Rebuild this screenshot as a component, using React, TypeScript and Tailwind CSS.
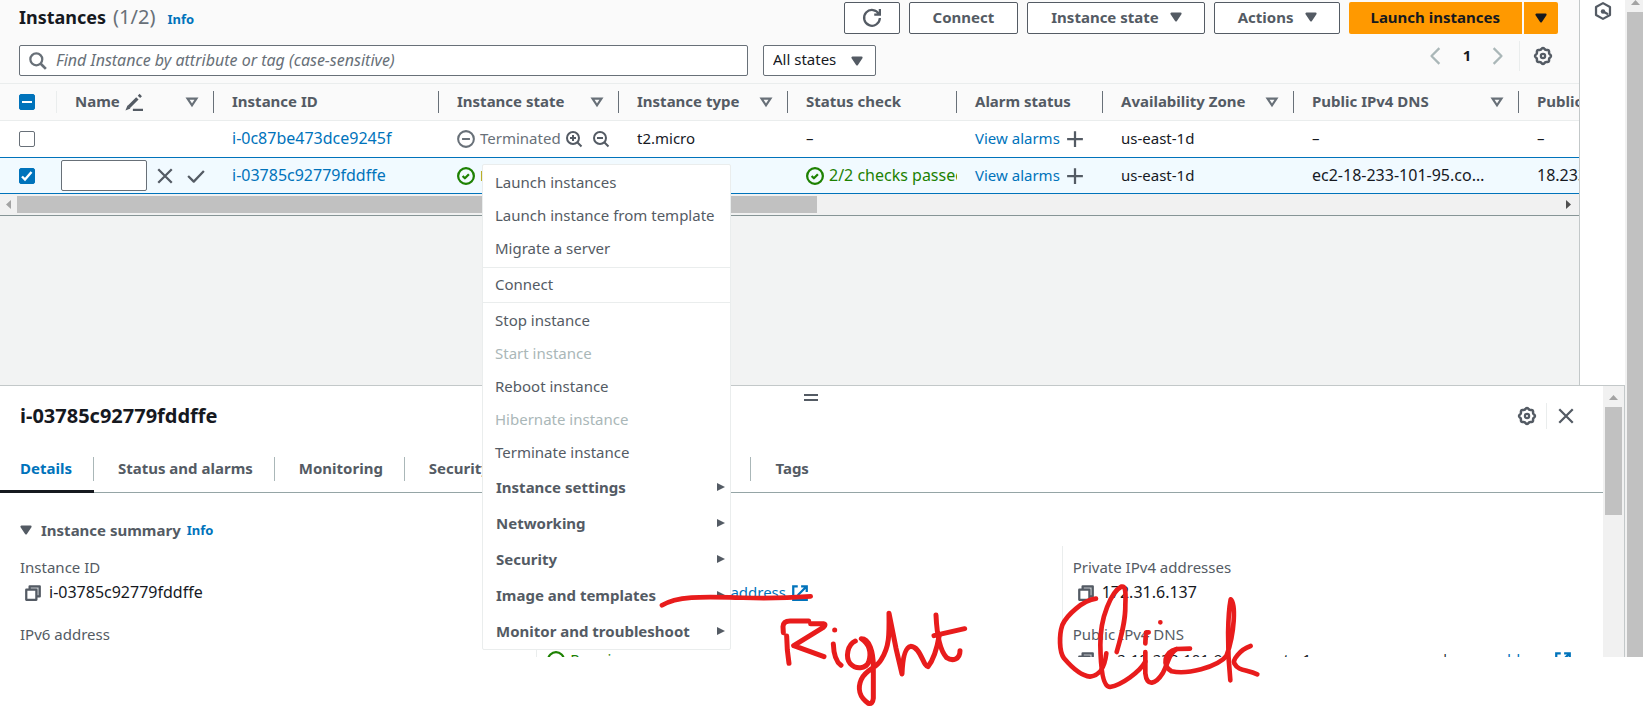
import React, { useEffect, useRef, useState } from "react";

type IconProps = { className?: string; children: React.ReactNode };

function Icon({ className = "size-[18px]", children }: IconProps) {
  return (
    <svg
      viewBox="0 0 16 16"
      fill="none"
      stroke="currentColor"
      strokeWidth="2"
      strokeLinejoin="round"
      className={"shrink-0 overflow-visible " + className}
      aria-hidden="true"
    >
      {children}
    </svg>
  );
}

const CaretFilled = ({ className }: { className?: string }) => (
  <Icon className={className}>
    <path d="M4 5h8l-4 6-4-6z" fill="currentColor" />
  </Icon>
);
const CaretHollow = () => (
  <Icon>
    <path d="M4 5h8l-4 6-4-6z" strokeLinejoin="miter" strokeWidth="1.9" />
  </Icon>
);
const CaretRight = () => (
  <Icon className="size-2">
    <path d="M0 0l16 8-16 8z" fill="currentColor" stroke="none" />
  </Icon>
);
const StatusOk = () => (
  <Icon>
    <circle cx="8" cy="8" r="7" />
    <path d="m5 8 2 2 3.6-3.6" />
  </Icon>
);
const StatusStopped = () => (
  <Icon>
    <circle cx="8" cy="8" r="7" strokeWidth="1.8" />
    <path d="M11.5 8h-7" strokeWidth="1.8" />
  </Icon>
);
const Plus = () => (
  <Icon>
    <path d="M8 1v14M1 8h14" />
  </Icon>
);
const Close = ({ className }: { className?: string }) => (
  <Icon className={className}>
    <path d="m2 2 12 12M14 2 2 14" />
  </Icon>
);
const Copy = () => (
  <Icon>
    <path d="M5 5V2h9v9h-3" fill="#c3c7ca" />
    <path d="M2 5h9v9H2z" fill="#fff" />
  </Icon>
);
const External = () => (
  <Icon>
    <path d="M9 2h5v5M6 10l8-8M14 10v4H2V2h4" strokeLinejoin="miter" />
  </Icon>
);

const gearPath =
  Array.from({ length: 96 }, (_, i) => {
    const a = (i / 96) * Math.PI * 2;
    const r = 6.5 + 0.55 * Math.cos(8 * a);
    return (i ? "L" : "M") + (8 + r * Math.cos(a)).toFixed(2) + " " + (8 + r * Math.sin(a)).toFixed(2);
  }).join("") + "Z";

const Gear = () => (
  <Icon>
    <path d={gearPath} strokeWidth="2.2" />
    <circle cx="8" cy="8" r="1.9" />
  </Icon>
);

function Checkbox({ label, state }: { label: string; state: "on" | "off" | "mixed" }) {
  const ref = useRef<HTMLInputElement>(null);
  const [on, setOn] = useState(state === "on");
  useEffect(() => {
    if (ref.current) ref.current.indeterminate = state === "mixed";
  }, [state]);
  return (
    <label className="grid size-4 place-items-center">
      <input
        ref={ref}
        type="checkbox"
        aria-label={label}
        checked={on}
        onChange={(e) => setOn(e.target.checked)}
        className="peer col-start-1 row-start-1 size-4 appearance-none rounded-[2px] border border-[#687078] bg-white checked:border-[#0073bb] checked:bg-[#0073bb] indeterminate:border-[#0073bb] indeterminate:bg-[#0073bb]"
      />
      <svg viewBox="0 0 16 16" fill="none" stroke="#fff" strokeWidth="2" className="pointer-events-none col-start-1 row-start-1 size-4">
        {state === "mixed" && <path d="M3 8h10" />}
        {on && <path d="m3 8.5 3 3L12.5 4" strokeWidth="2.4" />}
      </svg>
    </label>
  );
}

const outlineBtn = "flex h-8 items-center rounded-[2px] border border-[#545b64] bg-white pb-[2px] font-bold text-[#545b64]";

function Toolbar() {
  return (
    <div className="flex items-start justify-between pt-[2px] pr-[21px] pl-[19px]">
      <h1 className="flex items-baseline text-[18px] leading-[30px]">
        <span className="font-bold text-[#16191f]">Instances</span>
        <span className="ml-[7px] text-[20px] text-[#687078]">(1/2)</span>
        <a href="#info" className="ml-3 text-[13px] font-bold text-[#0073bb]">Info</a>
      </h1>
      <div className="flex gap-[9px]">
        <button aria-label="Refresh" className="grid h-8 w-14 place-items-center rounded-[2px] border border-[#545b64] bg-white text-[#545b64]">
          <Icon>
            <path d="M10 5h5V0M15 8a7 7 0 1 1-.8-3.4" strokeLinejoin="miter" />
          </Icon>
        </button>
        <button className={outlineBtn + " px-[23px]"}>Connect</button>
        <button className={outlineBtn + " gap-2 pr-[19px] pl-[23px]"}>Instance state <CaretFilled /></button>
        <button className={outlineBtn + " gap-2 pr-[19px] pl-[23px]"}>Actions <CaretFilled /></button>
        <div className="flex gap-[2px]">
          <button className="h-8 rounded-l-[2px] bg-[#ff9900] px-[22px] pb-[2px] font-bold text-[#16191f]">Launch instances</button>
          <button aria-label="More launch options" className="grid h-8 w-[34px] place-items-center rounded-r-[2px] bg-[#ff9900] text-[#16191f]">
            <CaretFilled />
          </button>
        </div>
      </div>
    </div>
  );
}

function Filters() {
  return (
    <div className="flex items-start pt-[7px] pr-[13px] pl-[19px]">
      <label className="mt-1 flex h-[31px] w-[729px] items-center gap-[9px] rounded-[2px] border border-[#687078] bg-white px-[9px] text-[#687078]">
        <Icon>
          <circle cx="6.5" cy="6.5" r="5.3" />
          <path d="m15 15-4.8-4.8" strokeWidth="2.4" />
        </Icon>
        <input
          type="search"
          aria-label="Find Instance by attribute or tag"
          placeholder="Find Instance by attribute or tag (case-sensitive)"
          className="min-w-0 flex-1 bg-transparent pb-[2px] text-base outline-none placeholder:text-[#687078] placeholder:italic"
        />
      </label>
      <label className="mt-1 ml-[15px] grid w-[113px] items-center">
        <select aria-label="Instance state filter" className="col-start-1 row-start-1 h-[31px] appearance-none rounded-[2px] border border-[#687078] bg-white pb-1 pl-[9px] text-[#16191f]">
          <option>All states</option>
        </select>
        <span className="pointer-events-none col-start-1 row-start-1 mr-[10px] justify-self-end text-[#545b64]">
          <CaretFilled />
        </span>
      </label>
      <nav aria-label="Pages" className="ml-auto flex h-[30px] items-center">
        <button aria-label="Previous page" className="grid w-[34px] place-items-center text-[#aab7b8]">
          <Icon><path d="M11 1 4 8l7 7" /></Icon>
        </button>
        <button className="w-7 pb-[2px] text-center font-bold text-[#16191f]">1</button>
        <button aria-label="Next page" className="grid w-8 place-items-center text-[#aab7b8]">
          <Icon><path d="m5 1 7 7-7 7" /></Icon>
        </button>
        <span className="ml-[6px] h-[30px] w-px bg-[#eaeded]" />
        <button aria-label="Preferences" className="grid w-[46px] place-items-center text-[#545b64]">
          <Gear />
        </button>
      </nav>
    </div>
  );
}

type Column = { title: string; sort?: boolean; edit?: boolean };
const columns: Column[] = [
  { title: "Name", sort: true, edit: true },
  { title: "Instance ID" },
  { title: "Instance state", sort: true },
  { title: "Instance type", sort: true },
  { title: "Status check" },
  { title: "Alarm status" },
  { title: "Availability Zone", sort: true },
  { title: "Public IPv4 DNS", sort: true },
  { title: "Public IPv4 address" },
];

const cell = "overflow-hidden pl-[18px]";
const textCell = "overflow-hidden pl-[18px] pb-[2px]";
const selected = "border-y border-[#0073bb]";

const ViewAlarms = () => (
  <div className="flex items-center gap-[6px]">
    <a href="#alarms" className="pb-[2px] text-[#0073bb]">View alarms</a>
    <button aria-label="Create alarm" className="text-[#545b64]"><Plus /></button>
  </div>
);

function InstancesTable() {
  return (
    <div className="overflow-hidden">
      <table className="w-full table-fixed border-separate border-spacing-0 whitespace-nowrap text-[#16191f]">
        <colgroup>
          <col className="w-[57px]" />
          <col className="w-[157px]" />
          <col className="w-[225px]" />
          <col className="w-[180px]" />
          <col className="w-[169px]" />
          <col className="w-[169px]" />
          <col className="w-[146px]" />
          <col className="w-[191px]" />
          <col className="w-[225px]" />
          <col />
        </colgroup>
        <thead className="bg-[#fafafa] text-[#545b64]">
          <tr className="h-[38px]">
            <th className="border-y border-[#eaeded] p-0">
              <div className="flex h-[22px] items-center border-r border-[#eaeded] pl-[19px]">
                <Checkbox label="Select all instances" state="mixed" />
              </div>
            </th>
            {columns.map((c, i) => (
              <th key={c.title} className="overflow-hidden border-y border-[#eaeded] p-0 font-bold">
                <div className={"flex h-[22px] items-center pr-3 pl-[18px] " + (i < columns.length - 1 ? "border-r border-[#687078]" : "")}>
                  <span className="pb-[2px]">{c.title}</span>
                  {c.edit && (
                    <span className="ml-[5px]">
                      <Icon>
                        <path d="M7 15h9" />
                        <path d="m3.2 12.6 7.8-7.8M12.4 3.4 14 1.8" strokeWidth="3" />
                        <path d="m.4 15.6 1.8-4.4 2.6 2.6z" fill="currentColor" stroke="none" />
                      </Icon>
                    </span>
                  )}
                  {c.sort && (
                    <button aria-label={"Sort by " + c.title} className="ml-auto text-[#687078]">
                      <CaretHollow />
                    </button>
                  )}
                </div>
              </th>
            ))}
          </tr>
        </thead>
        <tbody>
          <tr className="h-9 bg-white">
            <td className="p-0 pl-[19px]"><Checkbox label="Select i-0c87be473dce9245f" state="off" /></td>
            <td />
            <td className={textCell}><a href="#i-0c87be473dce9245f" className="text-base leading-5 text-[#0073bb]">i-0c87be473dce9245f</a></td>
            <td className={cell}>
              <div className="flex items-center text-[#687078]">
                <StatusStopped />
                <span className="mx-[5px] pb-[2px]">Terminated</span>
                <button aria-label="Include state" className="text-[#545b64]">
                  <Icon className="size-4">
                    <circle cx="7" cy="7" r="6" /><path d="m11.5 11.5 4 4M7 4v6M4 7h6" />
                  </Icon>
                </button>
                <button aria-label="Exclude state" className="ml-[11px] text-[#545b64]">
                  <Icon className="size-4">
                    <circle cx="7" cy="7" r="6" /><path d="m11.5 11.5 4 4M4 7h6" />
                  </Icon>
                </button>
              </div>
            </td>
            <td className={textCell}>t2.micro</td>
            <td className={textCell}>–</td>
            <td className={cell}><ViewAlarms /></td>
            <td className={textCell}>us-east-1d</td>
            <td className={textCell}>–</td>
            <td className={textCell}>–</td>
          </tr>
          <tr className="h-[37px] bg-[#f1faff]">
            <td className={"p-0 pl-[19px] " + selected}><Checkbox label="Select i-03785c92779fddffe" state="on" /></td>
            <td className={"p-0 pl-1 " + selected}>
              <div className="flex items-center text-[#545b64]">
                <input aria-label="Name" className="h-[31px] w-[86px] rounded-[2px] border border-[#687078] bg-white px-2" />
                <button aria-label="Cancel edit" className="ml-[9px]"><Close /></button>
                <button aria-label="Save name" className="ml-[13px]">
                  <Icon><path d="m1 8 5 5 9-9.5" /></Icon>
                </button>
              </div>
            </td>
            <td className={textCell + " " + selected}><a href="#i-03785c92779fddffe" className="text-base leading-5 text-[#0073bb]">i-03785c92779fddffe</a></td>
            <td className={cell + " " + selected}>
              <div className="flex items-center gap-[5px] text-[#1d8102]"><StatusOk /><span className="pb-[2px]">Running</span></div>
            </td>
            <td className={textCell + " " + selected}>t2.micro</td>
            <td className={cell + " " + selected}>
              <div className="flex items-center gap-[5px] text-[#1d8102]"><StatusOk /><span className="pb-[2px] text-base leading-5">2/2 checks passed</span></div>
            </td>
            <td className={cell + " " + selected}><ViewAlarms /></td>
            <td className={textCell + " " + selected}>us-east-1d</td>
            <td className={textCell + " text-base leading-5 " + selected}>ec2-18-233-101-95.co…</td>
            <td className={textCell + " text-base leading-5 " + selected}>18.233.101.95</td>
          </tr>
        </tbody>
      </table>
      <div className="flex h-[22px] items-end border-b border-[#879596] bg-[#f1f1f1] pb-[2px]">
        <span className="grid h-[17px] w-[17px] place-items-center text-[#a3a3a3]">
          <svg viewBox="0 0 5 9" className="h-[9px] w-[5px]"><path d="M5 0v9L0 4.5z" fill="currentColor" /></svg>
        </span>
        <span className="h-[17px] w-[800px] bg-[#c1c1c1]" />
        <span className="ml-auto grid h-[17px] w-[22px] place-items-center text-[#505050]">
          <svg viewBox="0 0 5 9" className="h-[9px] w-[5px]"><path d="M0 0v9l5-4.5z" fill="currentColor" /></svg>
        </span>
      </div>
    </div>
  );
}

function Field({ label, children }: { label: string; children: React.ReactNode }) {
  return (
    <div className="pb-[17px] leading-[25px]">
      <div className="text-[#545b64]">{label}</div>
      <div className="flex items-center text-[#16191f]">{children}</div>
    </div>
  );
}

const CopyButton = () => (
  <button aria-label="Copy" className="mr-[7px] ml-1 text-[#545b64]"><Copy /></button>
);
const OpenAddress = () => (
  <>
    <span className="mx-1">|</span>
    <a href="#open" className="flex items-center gap-[5px] text-[#0073bb]">open address <External /></a>
  </>
);

const tabs = ["Details", "Status and alarms", "Monitoring", "Security", "Networking", "Storage", "Tags"];

function DetailPanel() {
  return (
    <section className="flex h-[272px] shrink-0 overflow-hidden border-t border-r border-[#c3c8c9] bg-white">
      <div className="flex min-w-0 flex-1 flex-col">
        <div className="flex h-4 items-center justify-center pl-[18px]">
          <button aria-label="Resize panel" className="mt-[7px] h-[7px] w-[14px] border-y-2 border-[#545b64]" />
        </div>
        <header className="flex h-7 items-center pr-7 pl-5">
          <h2 className="text-[20px] font-bold text-[#16191f]">i-03785c92779fddffe</h2>
          <div className="ml-auto flex items-center text-[#545b64]">
            <button aria-label="Panel settings"><Gear /></button>
            <span className="mx-[10px] h-[26px] w-px bg-[#eaeded]" />
            <button aria-label="Close panel"><Close /></button>
          </div>
        </header>
        <div role="tablist" className="mt-[18px] flex h-[45px] border-b border-[#95a5a6] font-bold text-[#545b64]">
          {tabs.map((t, i) => (
            <div key={t} className={"flex items-center " + (i === 0 ? "-mb-px border-b-[3px] border-[#16191f]" : "border-b-2 border-transparent")}>
              <button
                role="tab"
                aria-selected={i === 0}
                className={
                  i === 0
                    ? "h-6 border-r border-[#aab7b8] pr-[21px] pb-[2px] pl-5 text-[#0073bb]"
                    : i < tabs.length - 1
                      ? "h-6 border-r border-[#aab7b8] pr-[21px] pb-[2px] pl-6"
                      : "h-6 px-6 pb-[2px]"
                }
              >
                {t}
              </button>
            </div>
          ))}
        </div>
        <div className="flex h-[53px] shrink-0 items-center pt-5 pl-[17px]">
          <button className="flex items-center gap-[6px] font-bold text-[#545b64]">
            <CaretFilled />
            Instance summary
          </button>
          <a href="#info" className="ml-[6px] text-[13px] font-bold text-[#0073bb]">Info</a>
        </div>
        <div className="grid min-h-0 flex-1 grid-cols-3 pr-4 pl-[11px] whitespace-nowrap">
          <div className="pt-[9px] pl-[9px]">
            <Field label="Instance ID"><CopyButton /><span className="text-base leading-[25px]">i-03785c92779fddffe</span></Field>
            <Field label="IPv6 address">–</Field>
          </div>
          <div className="border-l border-[#eaeded] pt-[9px] pl-[10px]">
            <Field label="Public IPv4 address"><CopyButton />18.233.101.95<OpenAddress /></Field>
            <Field label="Instance state">
              <span className="flex items-center gap-[5px] text-[#1d8102]"><StatusOk /> Running</span>
            </Field>
          </div>
          <div className="border-l border-[#eaeded] pt-[9px] pl-[10px]">
            <Field label="Private IPv4 addresses"><CopyButton /><span className="text-base leading-[25px]">172.31.6.137</span></Field>
            <Field label="Public IPv4 DNS"><CopyButton />ec2-18-233-101-95.compute-1.amazonaws.com<span className="w-1" /><OpenAddress /></Field>
          </div>
        </div>
      </div>
      <div className="flex w-[21px] flex-col items-center bg-[#f1f1f1]">
        <svg viewBox="0 0 9 5" className="mt-[9px] mb-[7px] h-[5px] w-[9px] shrink-0"><path d="M0 5h9L4.5 0z" fill="#a3a3a3" /></svg>
        <span className="h-[108px] w-[17px] bg-[#c1c1c1]" />
      </div>
    </section>
  );
}

const menuItem = "flex h-[33px] w-full items-center px-3 pb-[2px] text-left text-[#545b64] disabled:text-[#aab7b8]";

function ContextMenu() {
  return (
    <div role="menu" className="absolute top-[164px] left-[482px] w-[249px] rounded-[2px] border border-[#eaeded] bg-white whitespace-nowrap">
      <div className="border-b border-[#eaeded] pt-px pb-[2px]">
        <button role="menuitem" className={menuItem}>Launch instances</button>
        <button role="menuitem" className={menuItem}>Launch instance from template</button>
        <button role="menuitem" className={menuItem}>Migrate a server</button>
      </div>
      <div className="border-b border-[#eaeded] pb-px">
        <button role="menuitem" className={menuItem}>Connect</button>
      </div>
      <div className="pt-px">
        <button role="menuitem" className={menuItem}>Stop instance</button>
        <button role="menuitem" disabled className={menuItem}>Start instance</button>
        <button role="menuitem" className={menuItem}>Reboot instance</button>
        <button role="menuitem" disabled className={menuItem}>Hibernate instance</button>
        <button role="menuitem" className={menuItem}>Terminate instance</button>
      </div>
      {["Instance settings", "Networking", "Security", "Image and templates", "Monitor and troubleshoot"].map((t) => (
        <button key={t} role="menuitem" aria-haspopup="true" className="flex h-9 w-full items-center justify-between pr-[5px] pl-[13px] font-bold text-[#545b64]">
          {t}
          <CaretRight />
        </button>
      ))}
    </div>
  );
}

function Annotation() {
  return (
    <svg
      viewBox="0 0 660 130"
      role="img"
      aria-label="Handwritten note: Right Click"
      fill="none"
      stroke="#e81c1c"
      strokeLinecap="round"
      strokeLinejoin="round"
      className="pointer-events-none absolute top-[578px] left-[650px] h-[130px] w-[660px]"
    >
      <g transform="translate(-180 -178) scale(.33333)" strokeWidth="14">
        <path d="M576 616C620 588 700 590 780 592S900 598 1022 589" />
      </g>
      <g transform="translate(110 -18) scale(.33333)" strokeWidth="15">
        <path d="M70 218L69 200Q70 183 90 183L146 183M152 191L190 191Q200 193 190 202L101 257L192 290M80 228L82 270L87 310" />
        <path d="M224 210h.1M220 252C221 280 228 305 243 316" />
        <path d="M286 243C262 254 256 292 270 310C288 330 318 326 326 306C336 276 326 250 304 236C328 236 340 275 340 320L340 415Q338 434 325 430C298 412 292 385 304 358C320 325 348 328 364 298C388 260 388 225 387 160L408 265L426 342C428 290 436 262 452 259C482 260 490 320 504 320C520 300 532 260 538 225" />
        <path d="M528 165C530 210 536 268 560 293C578 305 600 298 600 272M522 227L614 206" />
      </g>
      <g transform="translate(390 -48) scale(.33333)" strokeWidth="14">
        <path d="M168 206C130 210 80 255 67 285C57 315 57 365 72 385C95 412 125 438 150 440C185 436 195 405 199 370" />
        <path d="M230 366C242 325 257 275 256 225C258 180 256 168 244 170C215 185 180 260 181 345C182 410 188 470 210 471C245 465 300 425 316 395" />
        <path d="M316 366L316 430C320 472 348 462 368 430C385 400 385 372 410 357L450 356" />
        <path d="M410 357C372 366 365 408 395 424C440 434 530 414 562 376" />
        <path d="M571 451C560 350 564 250 572 208C588 222 584 310 560 376M632 348C598 360 578 390 583 400C595 424 620 418 652 433" />
        <path d="M361 277h.1M316 340L317 318M318 308L326 307" />
      </g>
    </svg>
  );
}

export default function App() {
  return (
    <div className="relative h-screen overflow-hidden bg-white pb-[51px] font-['Noto_Sans',sans-serif] text-[15px] leading-5">
      <div className="flex h-full">
        <div className="flex min-w-0 flex-1 flex-col">
          <div className="flex min-h-0 flex-1">
            <main className="min-w-0 flex-1 overflow-hidden bg-[#f2f3f3]">
              <div className="h-[83px] bg-[#fafafa]">
                <Toolbar />
                <Filters />
              </div>
              <InstancesTable />
            </main>
            <aside className="w-[46px] border-l border-[#c3c8c9] bg-white pt-[2px] pl-[14px] text-[#545b64]">
              <button aria-label="Open tools">
                <Icon className="size-[18px]">
                  <path d="M8 1l6.2 3.5v7L8 15l-6.2-3.5v-7z" />
                  <circle cx="8" cy="8.5" r="2" fill="currentColor" stroke="none" />
                  <path d="m8 8.5 4.5 2.4" />
                </Icon>
              </button>
            </aside>
          </div>
          <DetailPanel />
        </div>
        <div className="flex w-[18px] flex-col bg-[#f1f1f1] pl-[2px]">
          <svg viewBox="0 0 9 5" className="mb-[7px] ml-1 h-[5px] w-[9px] shrink-0"><path d="M0 5h9L4.5 0z" fill="#a3a3a3" /></svg>
          <span className="flex-1 bg-[#c1c1c1]" />
        </div>
      </div>
      <ContextMenu />
      <Annotation />
    </div>
  );
}
